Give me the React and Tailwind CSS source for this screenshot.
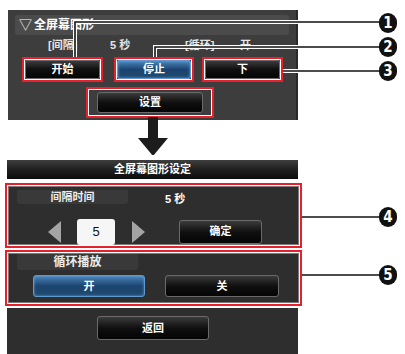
import React from 'react';

const font = "font-['Liberation_Sans','Noto_Sans_CJK_SC',sans-serif]";

function RedBox({ className = '', children }) {
  // annotation frame: red 2px, thin white line inside
  return (
    <div className={`border-2 border-[#e8202b] ${className}`}>
      <div className="h-full w-full border border-white">{children}</div>
    </div>
  );
}

function Btn({ children, blue = false, className = '' }) {
  const look = blue
    ? 'border-[#5d9ad2] bg-linear-to-b from-[#4a86bb] via-[#1c4470] to-[#20496f] shadow-[inset_0_0_3px_rgba(120,180,240,0.7)]'
    : 'border-[#6a6a6a] bg-linear-to-b from-[#3c3c3c] via-[#101010] to-[#050505]';
  return (
    <div className={`flex items-center justify-center rounded-[2px] border text-[11px] font-bold text-white ${look} ${className}`}>
      {children}
    </div>
  );
}

function Badge({ n, top }) {
  return (
    <div
      className="absolute left-[379px] flex h-[20px] w-[18px] items-center justify-center rounded-full bg-[#111] font-['DejaVu_Sans_Condensed',sans-serif] text-[15px] font-bold leading-none text-white"
      style={{ top }}
    >
      {n}
    </div>
  );
}

export default function App() {
  return (
    <div className={`relative h-[354px] w-[405px] overflow-hidden bg-white ${font}`}>
      {/* top panel: full screen graphics menu */}
      <div className="ml-[8px] mt-[10px] h-[110px] w-[290px] border-r-2 border-[#2a2a2a] bg-[#3d3d3d] px-[7px] pt-[5px]">
        <div className="flex h-[20px] items-center rounded-[3px] bg-[#4b4b4b] pl-[4px] text-[12px] font-bold text-white">
          <span className="mr-[2px] text-[13px] font-normal">▽</span>全屏幕图形
        </div>
        <div className="mt-[2px] flex h-[17px] items-center pl-[33px] text-[11px] font-bold text-[#e6e6e6]">
          <span className="w-[62px]">[间隔]</span>
          <span className="w-[75px]">5 秒</span>
          <span className="w-[55px]">[循环]</span>
          <span>开</span>
        </div>
        <div className="mt-[3px] flex h-[25px]">
          <RedBox className="ml-[7px] w-[81px]">
            <Btn className="h-full">开始</Btn>
          </RedBox>
          <RedBox className="ml-[11px] w-[80px]">
            <Btn blue className="h-full">停止</Btn>
          </RedBox>
          <RedBox className="ml-[8px] w-[81px]">
            <Btn className="h-full">下</Btn>
          </RedBox>
        </div>
        <RedBox className="ml-[71px] mt-[5px] h-[31px] w-[128px]">
          <div className="h-full px-[8px] py-[2px]">
            <Btn className="h-full rounded-[3px]">设置</Btn>
          </div>
        </RedBox>
      </div>

      {/* arrow */}
      <svg width="32" height="38" viewBox="0 0 32 38" className="-mt-[3px] ml-[137px] block">
        <rect x="11" y="0" width="10" height="22" fill="#1c1c1c" />
        <polygon points="1,21 31,21 16,39" fill="#1c1c1c" />
      </svg>

      {/* settings screen */}
      <div className="ml-[7px] mt-[5px] flex h-[19px] w-[291px] items-center justify-center bg-linear-to-b from-[#3e3e3e] via-[#202020] to-[#0c0c0c] text-[11px] font-bold text-white">
        全屏幕图形设定
      </div>

      <RedBox className="ml-[5px] mt-[4px] h-[65px] w-[297px]">
        <div className="h-full border border-[#7a7a7a] bg-[#2e2e2e]">
          <div className="flex items-center">
            <div className="ml-[8px] flex h-[14px] w-[111px] items-center justify-center rounded-b-[3px] bg-[#393939] text-[11px] font-bold text-[#eeeeee]">
              间隔时间
            </div>
            <span className="ml-[37px] mt-[4px] text-[11px] font-bold text-white">5 秒</span>
          </div>
          <div className="mt-[11px] flex h-[26px] items-center">
            <svg width="13" height="22" viewBox="0 0 13 22" className="ml-[39px]">
              <polygon points="13,0 13,22 0,11" fill="#a4a4a4" />
            </svg>
            <div className="ml-[16px] flex h-[26px] w-[38px] items-center justify-center rounded-[3px] bg-[#f6f6f6] text-[13px] text-[#111]">
              5
            </div>
            <svg width="13" height="22" viewBox="0 0 13 22" className="ml-[17px]">
              <polygon points="0,0 0,22 13,11" fill="#a4a4a4" />
            </svg>
            <Btn className="ml-[34px] h-[24px] w-[83px] rounded-[3px] border-[#4a4a4a]">确定</Btn>
          </div>
        </div>
      </RedBox>

      <RedBox className="ml-[5px] mt-[2px] h-[56px] w-[297px]">
        <div className="h-full border border-[#7a7a7a] bg-[#2e2e2e]">
          <div className="ml-[8px] flex h-[16px] w-[121px] items-center justify-center rounded-b-[3px] bg-[#393939] text-[12px] font-bold text-[#eeeeee]">
            循环播放
          </div>
          <div className="mt-[5px] flex">
            <Btn blue className="ml-[24px] h-[22px] w-[112px] rounded-[3px] border-[#3f7fc0]">开</Btn>
            <Btn className="ml-[20px] h-[22px] w-[114px] rounded-[3px] border-[#4a4a4a]">关</Btn>
          </div>
        </div>
      </RedBox>

      <div className="ml-[7px] mt-[2px] h-[46px] w-[291px] bg-[#2e2e2e] pt-[8px]">
        <Btn className="ml-[90px] h-[24px] w-[112px] rounded-[3px] border-[#4a4a4a]">返回</Btn>
      </div>

      {/* callout lines */}
      <svg width="405" height="354" className="pointer-events-none absolute left-0 top-0">
        <g fill="none" strokeLinejoin="miter">
          <path d="M75 57 V22 H380" stroke="#fff" strokeWidth="4" />
          <path d="M155 57 V47 H380" stroke="#fff" strokeWidth="4" />
          <path d="M283 71 H380" stroke="#fff" strokeWidth="4" />
          <path d="M75 57 V22 H380" stroke="#111" strokeWidth="1.6" />
          <path d="M155 57 V47 H380" stroke="#111" strokeWidth="1.6" />
          <path d="M283 71 H380" stroke="#111" strokeWidth="1.6" />
          <path d="M302 217 H380" stroke="#111" strokeWidth="1.6" />
          <path d="M302 275 H380" stroke="#111" strokeWidth="1.6" />
        </g>
      </svg>
      <Badge n="1" top={13} />
      <Badge n="2" top={37} />
      <Badge n="3" top={61} />
      <Badge n="4" top={207} />
      <Badge n="5" top={265} />
    </div>
  );
}
